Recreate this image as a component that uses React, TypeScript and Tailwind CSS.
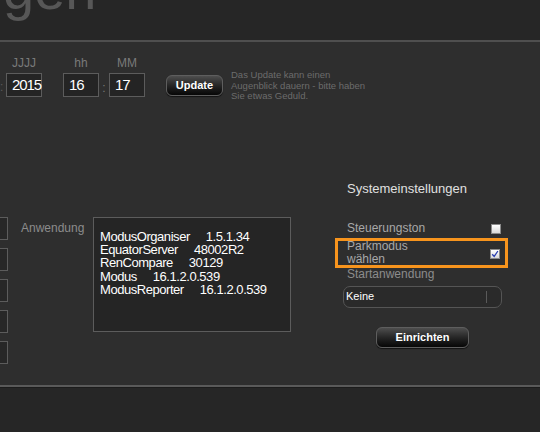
import React from "react";

const font = { fontFamily: '"Liberation Sans", Arial, sans-serif' };

function DarkButton({ label, w }: { label: string; w: string }) {
  return (
    <div
      className={`${w} h-[21px] rounded-[6px] border border-[#5e5e5e] bg-linear-to-b from-[#4e4e4e] via-[#262626] to-[#070707] flex items-center justify-center text-[11px] font-bold text-white shadow-[0_1px_1px_rgba(0,0,0,0.6)]`}
    >
      {label}
    </div>
  );
}

function DateField({ label, value }: { label: string; value: string }) {
  return (
    <div className="flex flex-col items-center">
      <div className="h-[17px] text-[12px] leading-[14px] text-[#7a7a7a]">{label}</div>
      <div className="w-[36px] h-[24px] border border-[#5c5c5c] bg-[#242424] pl-[5px] flex items-center text-[15px] tracking-[-1.1px] text-white">
        {value}
      </div>
    </div>
  );
}

function CheckBox({ checked }: { checked?: boolean }) {
  return (
    <div className="w-[10px] h-[10px] border border-[#8a8a8a] bg-linear-to-b from-[#ffffff] to-[#d8d8d8] flex items-center justify-center">
      {checked && (
        <svg width="8" height="8" viewBox="0 0 8 8">
          <path d="M1.2 4.2 L3.2 6.4 L6.9 1" stroke="#2a3fb0" strokeWidth="1.3" fill="none" />
        </svg>
      )}
    </div>
  );
}

const apps: [string, string][] = [
  ["ModusOrganiser", "1.5.1.34"],
  ["EquatorServer", "48002R2"],
  ["RenCompare", "30129"],
  ["Modus", "16.1.2.0.539"],
  ["ModusReporter", "16.1.2.0.539"],
];

export default function App() {
  return (
    <div className="w-[540px] h-[432px] overflow-hidden bg-[#2e2e2e] flex flex-col" style={font}>
      {/* header */}
      <div className="h-[40px] bg-[#262626] overflow-hidden pl-[3px]">
        <div className="text-[56px] leading-[56px] mt-[-38px] text-[#575757]">gen</div>
      </div>
      <div className="h-[2px] bg-[#4f4f4f]" />

      {/* main */}
      <div className="h-[343px] flex flex-col">
        {/* date row */}
        <div className="flex items-start pt-[14px]">
          <div className="w-[6px] mt-[24px] text-[12px] leading-[14px] text-[#5a5a5a] pr-[3px] text-right">:</div>
          <DateField label="JJJJ" value="2015" />
          <div className="ml-[21px]">
            <DateField label="hh" value="16" />
          </div>
          <div className="w-[10px] mt-[20px] h-[24px] flex items-center justify-center text-[12px] text-[#777]">:</div>
          <DateField label="MM" value="17" />
          <div className="ml-[21px] mt-[19px]">
            <DarkButton label="Update" w="w-[57px]" />
          </div>
          <div className="ml-[8px] mt-[14px] text-[9.5px] leading-[10.5px] text-[#6c6c6c] whitespace-nowrap">
            Das Update kann einen
            <br />
            Augenblick dauern - bitte haben
            <br />
            Sie etwas Geduld.
          </div>
        </div>

        {/* second row */}
        <div className="flex mt-[78px]">
          <div className="flex pt-[37px]">
            <div className="flex flex-col gap-[8px] -ml-[32px]">
              {[0, 1, 2, 3, 4].map((i) => (
                <div key={i} className="w-[40px] h-[23px] border border-[#5c5c5c] bg-[#272727]" />
              ))}
            </div>
            <div className="ml-[13px] w-[72px] pt-[4px] text-[12px] leading-[14px] text-[#8c8c8c]">Anwendung</div>
            <div className="w-[198px] h-[115px] border border-[#5c5c5c] bg-[#252525] pl-[6px] pt-[12px] text-[13px] leading-[13.4px] tracking-[-0.45px] text-white">
              {apps.map(([n, v]) => (
                <div key={n} className="whitespace-nowrap">
                  <span>{n}</span>
                  <span className="ml-[16px]">{v}</span>
                </div>
              ))}
            </div>
          </div>

          {/* settings panel */}
          <div className="ml-auto mr-[32px] w-[173px] flex flex-col">
            <div className="pl-[12px] text-[13px] leading-[16px] text-[#e0e0e0] pt-[1px]">Systemeinstellungen</div>
            <div className="mt-[23px] h-[16px] pl-[12px] pr-[7px] flex items-center justify-between text-[12px] text-[#a8a8a8]">
              <span>Steuerungston</span>
              <div className="mt-[3px]">
                <CheckBox />
              </div>
            </div>
            <div className="relative mt-[4px] h-[26px] pl-[12px] pr-[8px] flex items-center justify-between">
              <div className="text-[12px] leading-[13px] text-[#a8a8a8]">
                Parkmodus
                <br />
                wählen
              </div>
              <div className="mt-[2px]">
                <CheckBox checked />
              </div>
              <div className="absolute left-0 right-0 -top-[2px] -bottom-[2px] border-[3px] border-[#f7941d] z-10" />
            </div>
            <div className="pl-[12px] text-[12px] leading-[14px] text-[#8c8c8c] mt-[1px]">Startanwendung</div>
            <div className="ml-[8px] mt-[5px] w-[159px] h-[22px] rounded-[7px] border border-[#555] bg-[#2a2a2a] flex items-center pl-[2px] text-[11px] text-white">
              <span className="flex-1">Keine</span>
              <div className="w-px h-[12px] bg-[#5a5a5a] mr-[14px]" />
            </div>
            <div className="mt-[19px] self-center ml-[2px]">
              <DarkButton label="Einrichten" w="w-[93px]" />
            </div>
          </div>
        </div>
      </div>

      {/* footer */}
      <div className="h-[2px] bg-[#5a5a5a]" />
      <div className="h-[1px] bg-[#1c1c1c]" />
      <div className="flex-1 bg-[#262626]" />
    </div>
  );
}
